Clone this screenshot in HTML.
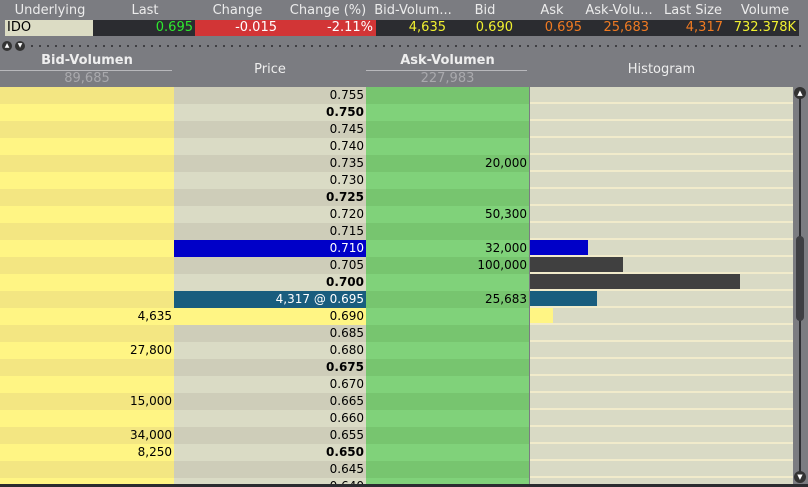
<!DOCTYPE html><html><head><style>
*{margin:0;padding:0;box-sizing:border-box}
body{width:808px;height:487px;overflow:hidden;background:#7b7c81;font-family:"DejaVu Sans","Liberation Sans",sans-serif;font-size:12px;position:relative}
.a{position:absolute}
.h{top:3px;color:#ececec;font-size:13px;text-align:center}
.v{top:20px;height:16px;line-height:16px;text-align:right;font-size:13px}
.r{position:absolute;left:0;width:793px;height:17px;line-height:17px}
.r div{position:absolute;top:0;height:17px;text-align:right;padding-right:2px}
.b{left:0;width:174px}.p{left:174px;width:192px}.k{left:366px;width:163px}.g{left:530px;width:263px;border-bottom:2px solid #f1ebcb}
.r:nth-child(odd) .b{background:#f3e682}.r:nth-child(even) .b{background:#fff584}
.r:nth-child(odd) .p{background:#cecdb9}.r:nth-child(even) .p{background:#dadbc5}
.r:nth-child(odd) .k{background:#77c56f}.r:nth-child(even) .k{background:#80d27a}
.g{background:#d9dac5}
.bold{font-weight:bold}
.bar{position:absolute;left:0;top:0;height:15px}
</style></head><body>
<div class="a h" style="left:0;width:100px">Underlying</div>
<div class="a h" style="left:115px;width:60px">Last</div>
<div class="a h" style="left:205px;width:65px">Change</div>
<div class="a h" style="left:283px;width:90px">Change (%)</div>
<div class="a h" style="left:371px;width:84px">Bid-Volum...</div>
<div class="a h" style="left:465px;width:40px">Bid</div>
<div class="a h" style="left:535px;width:34px">Ask</div>
<div class="a h" style="left:583px;width:72px">Ask-Volu...</div>
<div class="a h" style="left:658px;width:70px">Last Size</div>
<div class="a h" style="left:735px;width:60px">Volume</div>
<div class="a" style="left:5px;top:20px;width:88px;height:16px;background:#dcdcc4;line-height:16px;padding-left:2px;font-size:13px">IDO</div>
<div class="a" style="left:93px;top:20px;width:706px;height:16px;background:#2b2c30"></div>
<div class="a" style="left:195px;top:20px;width:181px;height:16px;background:#d23536"></div>
<div class="a v" style="left:93px;width:100px;color:#2ee82e">0.695</div>
<div class="a v" style="left:195px;width:82px;color:#fff">-0.015</div>
<div class="a v" style="left:277px;width:96px;color:#fff">-2.11%</div>
<div class="a v" style="left:376px;width:70px;color:#f0f030">4,635</div>
<div class="a v" style="left:446px;width:67px;color:#f0f030">0.690</div>
<div class="a v" style="left:513px;width:69px;color:#ef7a22">0.695</div>
<div class="a v" style="left:582px;width:67px;color:#ef7a22">25,683</div>
<div class="a v" style="left:649px;width:74px;color:#ef7a22">4,317</div>
<div class="a v" style="left:723px;width:73px;color:#f0f030">732.378K</div>
<div class="a" style="left:2px;top:41px;width:10px;height:10px;border-radius:50%;background:#333;color:#fff;font-size:6px;line-height:10px;text-align:center">▲</div>
<div class="a" style="left:15px;top:41px;width:10px;height:10px;border-radius:50%;background:#333;color:#fff;font-size:6px;line-height:10px;text-align:center">▼</div>
<div class="a" style="left:28px;top:45px;width:775px;height:2px;background-image:radial-gradient(circle,#3a3a3e 1px,transparent 1.2px);background-size:8px 2px"></div>
<div class="a" style="left:0;top:53px;width:174px;text-align:center;color:#eee;font-weight:bold;font-size:13px">Bid-Volumen</div>
<div class="a" style="left:0;top:70px;width:172px;height:1px;background:#b8b8bc"></div>
<div class="a" style="left:0;top:71px;width:174px;text-align:center;color:#a9a9ad;font-size:13px">89,685</div>
<div class="a" style="left:174px;top:62px;width:192px;text-align:center;color:#eee;font-size:13px">Price</div>
<div class="a" style="left:366px;top:53px;width:163px;text-align:center;color:#eee;font-weight:bold;font-size:13px">Ask-Volumen</div>
<div class="a" style="left:366px;top:70px;width:161px;height:1px;background:#b8b8bc"></div>
<div class="a" style="left:366px;top:71px;width:163px;text-align:center;color:#a9a9ad;font-size:13px">227,983</div>
<div class="a" style="left:530px;top:62px;width:263px;text-align:center;color:#eee;font-size:13px">Histogram</div>
<div class="a" style="left:0;top:87px;width:793px;height:397px;overflow:hidden">
<div class="r" style="top:0"><div class="b"></div><div class="p">0.755</div><div class="k"></div><div class="g"></div></div>
<div class="r" style="top:17px"><div class="b"></div><div class="p bold">0.750</div><div class="k"></div><div class="g"></div></div>
<div class="r" style="top:34px"><div class="b"></div><div class="p">0.745</div><div class="k"></div><div class="g"></div></div>
<div class="r" style="top:51px"><div class="b"></div><div class="p">0.740</div><div class="k"></div><div class="g"></div></div>
<div class="r" style="top:68px"><div class="b"></div><div class="p">0.735</div><div class="k">20,000</div><div class="g"></div></div>
<div class="r" style="top:85px"><div class="b"></div><div class="p">0.730</div><div class="k"></div><div class="g"></div></div>
<div class="r" style="top:102px"><div class="b"></div><div class="p bold">0.725</div><div class="k"></div><div class="g"></div></div>
<div class="r" style="top:119px"><div class="b"></div><div class="p">0.720</div><div class="k">50,300</div><div class="g"></div></div>
<div class="r" style="top:136px"><div class="b"></div><div class="p">0.715</div><div class="k"></div><div class="g"></div></div>
<div class="r" style="top:153px"><div class="b"></div><div class="p" style="background:#0000c8;color:#fff">0.710</div><div class="k">32,000</div><div class="g"><span class="bar" style="width:58px;background:#0000c8"></span></div></div>
<div class="r" style="top:170px"><div class="b"></div><div class="p">0.705</div><div class="k">100,000</div><div class="g"><span class="bar" style="width:93px;background:#404040"></span></div></div>
<div class="r" style="top:187px"><div class="b"></div><div class="p bold">0.700</div><div class="k"></div><div class="g"><span class="bar" style="width:210px;background:#404040"></span></div></div>
<div class="r" style="top:204px"><div class="b"></div><div class="p" style="background:#195d7e;color:#fff">4,317 @ 0.695</div><div class="k">25,683</div><div class="g"><span class="bar" style="width:67px;background:#195d7e"></span></div></div>
<div class="r" style="top:221px"><div class="b">4,635</div><div class="p" style="background:#fff584">0.690</div><div class="k"></div><div class="g"><span class="bar" style="width:23px;background:#fff584"></span></div></div>
<div class="r" style="top:238px"><div class="b"></div><div class="p">0.685</div><div class="k"></div><div class="g"></div></div>
<div class="r" style="top:255px"><div class="b">27,800</div><div class="p">0.680</div><div class="k"></div><div class="g"></div></div>
<div class="r" style="top:272px"><div class="b"></div><div class="p bold">0.675</div><div class="k"></div><div class="g"></div></div>
<div class="r" style="top:289px"><div class="b"></div><div class="p">0.670</div><div class="k"></div><div class="g"></div></div>
<div class="r" style="top:306px"><div class="b">15,000</div><div class="p">0.665</div><div class="k"></div><div class="g"></div></div>
<div class="r" style="top:323px"><div class="b"></div><div class="p">0.660</div><div class="k"></div><div class="g"></div></div>
<div class="r" style="top:340px"><div class="b">34,000</div><div class="p">0.655</div><div class="k"></div><div class="g"></div></div>
<div class="r" style="top:357px"><div class="b">8,250</div><div class="p bold">0.650</div><div class="k"></div><div class="g"></div></div>
<div class="r" style="top:374px"><div class="b"></div><div class="p">0.645</div><div class="k"></div><div class="g"></div></div>
<div class="r" style="top:391px"><div class="b"></div><div class="p">0.640</div><div class="k"></div><div class="g"></div></div>
</div>
<div class="a" style="left:799px;top:95px;width:2px;height:380px;background:#2e2f33"></div>
<div class="a" style="left:794px;top:87px;width:12px;height:12px;border-radius:50%;background:#333;color:#fff;font-size:7px;line-height:12px;text-align:center">▲</div>
<div class="a" style="left:794px;top:471px;width:12px;height:12px;border-radius:50%;background:#333;color:#fff;font-size:7px;line-height:12px;text-align:center">▼</div>
<div class="a" style="left:796px;top:236px;width:8px;height:85px;border-radius:4px;background:#3e3f43"></div>
<div class="a" style="left:0;top:484px;width:808px;height:3px;background:#2b2c30"></div>
</body></html>
